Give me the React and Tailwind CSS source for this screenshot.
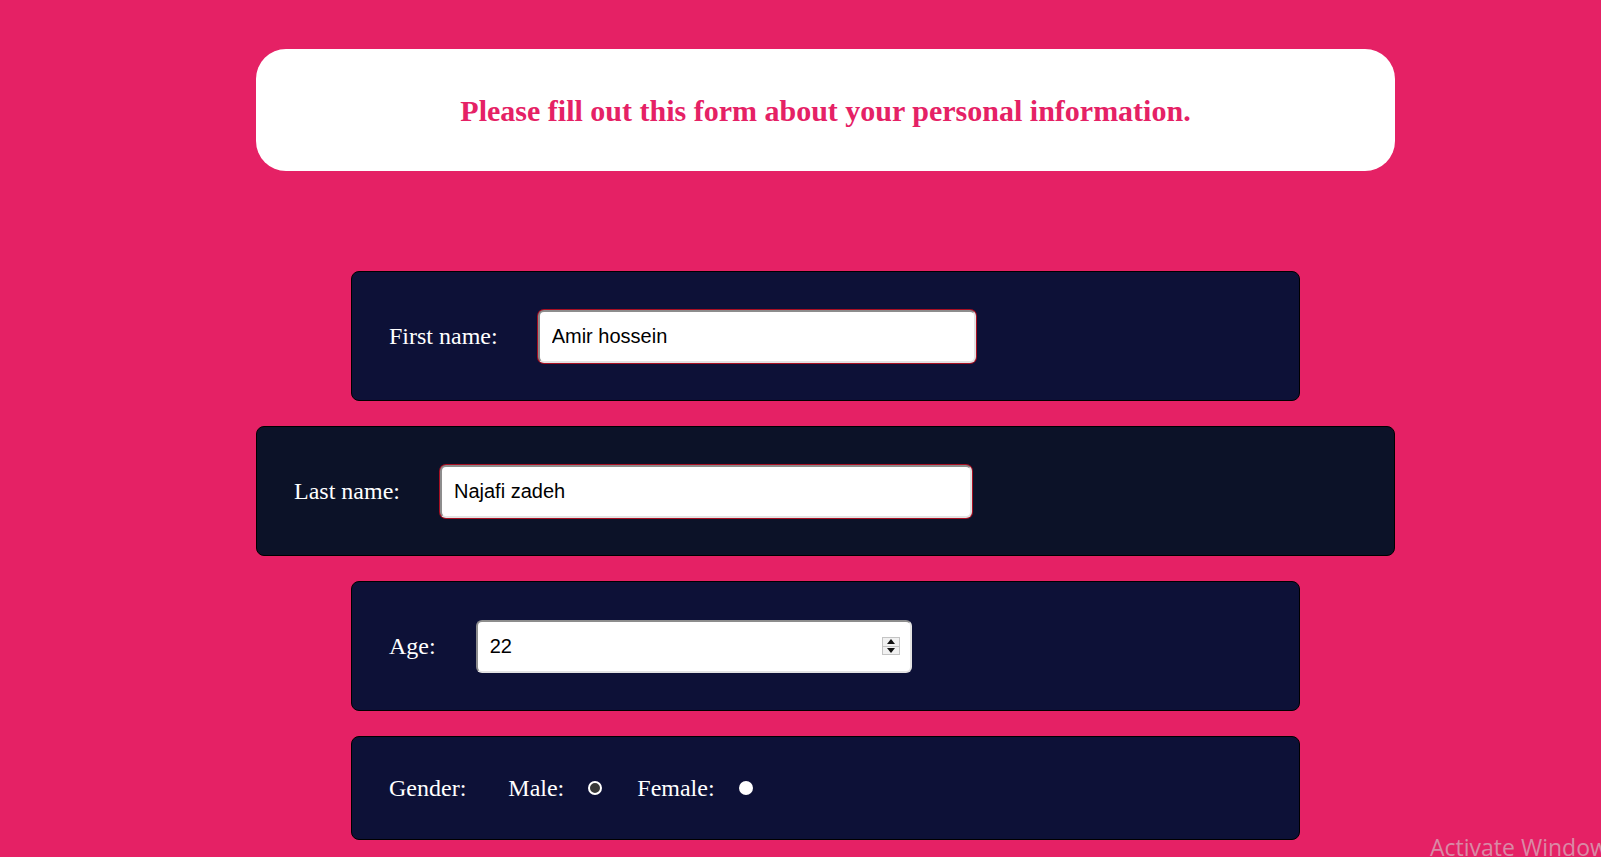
import React from 'react';

const serif = { fontFamily: '"Liberation Serif", "Times New Roman", serif' };
const sans = { fontFamily: '"Liberation Sans", Tahoma, sans-serif' };

const inputBase =
  'h-[53px] rounded-[6px] bg-white border-2 border-t-[#8d8d8d] border-l-[#8d8d8d] border-b-[#e3e3e3] border-r-[#e3e3e3] pl-3 text-[20px] text-black outline-none';

const Row = ({ children, className = '' }) => (
  <div
    className={`flex items-center px-[37px] border border-black rounded-[8px] ${className}`}
  >
    {children}
  </div>
);

const Label = ({ children, className = 'mr-[40px]' }) => (
  <span className={`text-[24px] leading-[26px] text-white ${className}`} style={serif}>
    {children}
  </span>
);

const Spinner = () => (
  <div className="absolute right-[12px] top-1/2 -translate-y-1/2 flex flex-col w-[18px] h-[18px] border border-[#c4c4c4] bg-[#f1f1f1]">
    <div className="flex-1 flex items-center justify-center border-b border-[#c4c4c4]">
      <svg width="8" height="5" viewBox="0 0 8 5">
        <polygon points="4,0 8,5 0,5" fill="#111" />
      </svg>
    </div>
    <div className="flex-1 flex items-center justify-center">
      <svg width="8" height="5" viewBox="0 0 8 5">
        <polygon points="0,0 8,0 4,5" fill="#111" />
      </svg>
    </div>
  </div>
);

const Radio = ({ checked }) =>
  checked ? (
    <span className="inline-block w-[14px] h-[14px] rounded-full bg-white" />
  ) : (
    <span className="inline-block w-[14px] h-[14px] rounded-full bg-[#383838] border-[2.5px] border-white" />
  );

export default function App() {
  return (
    <div className="relative min-h-screen w-full bg-[#e52165] pt-[49px] pb-10 overflow-hidden">
      {/* Title card */}
      <div className="ml-[256px] w-[1139px] h-[122px] rounded-[30px] bg-white flex items-center justify-center">
        <h2 className="text-[30px] font-bold text-[#e52165]" style={serif}>
          Please fill out this form about your personal information.
        </h2>
      </div>

      {/* Form rows */}
      <div className="mt-[100px] flex flex-col gap-[25px]">
        <Row className="ml-[351px] w-[949px] h-[130px] bg-[#0d1137]">
          <Label>First name:</Label>
          <input
            type="text"
            defaultValue="Amir hossein"
            className={`${inputBase} w-[438px] ring-1 ring-[#a80f22]`}
            style={sans}
          />
        </Row>

        <Row className="ml-[256px] w-[1139px] h-[130px] bg-[#0c1228]">
          <Label>Last name:</Label>
          <input
            type="text"
            defaultValue="Najafi zadeh"
            className={`${inputBase} w-[532px] ring-1 ring-[#a80f22]`}
            style={sans}
          />
        </Row>

        <Row className="ml-[351px] w-[949px] h-[130px] bg-[#0d1137]">
          <Label>Age:</Label>
          <div className="relative">
            <input
              type="text"
              defaultValue="22"
              className={`${inputBase} w-[436px]`}
              style={sans}
            />
            <Spinner />
          </div>
        </Row>

        <Row className="ml-[351px] w-[949px] h-[104px] bg-[#0d1137]">
          <Label className="mr-[42px]">Gender:</Label>
          <Label className="mr-[24px]">Male:</Label>
          <Radio />
          <Label className="ml-[35px] mr-[24px]">Female:</Label>
          <Radio checked />
        </Row>
      </div>

      {/* OS watermark */}
      <div
        className="absolute left-[1430px] top-[830px] text-[23px] text-[#d98aa6] whitespace-nowrap"
        style={{ fontFamily: '"Open Sans", sans-serif' }}
      >
        Activate Windows
      </div>
    </div>
  );
}
